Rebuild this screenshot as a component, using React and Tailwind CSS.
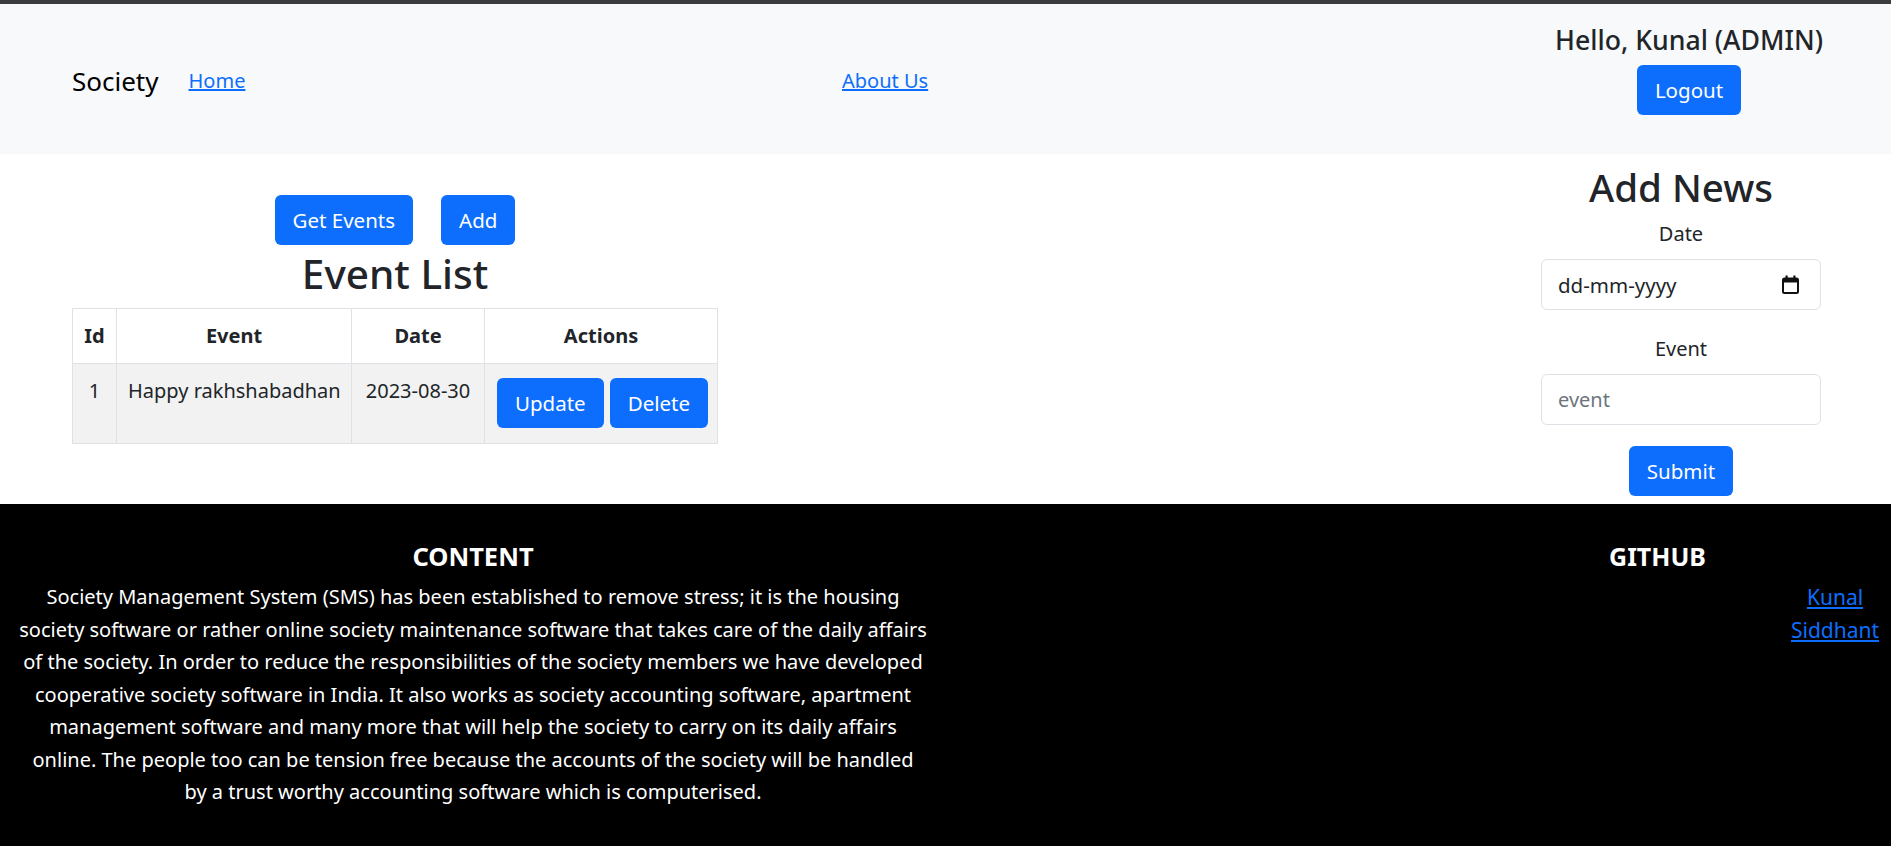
import React from "react";

const FONT = "font-['Noto_Sans',sans-serif]";

const paragraph = [
  "Society Management System (SMS) has been established to remove stress; it is the housing",
  "society software or rather online society maintenance software that takes care of the daily affairs",
  "of the society. In order to reduce the responsibilities of the society members we have developed",
  "cooperative society software in India. It also works as society accounting software, apartment",
  "management software and many more that will help the society to carry on its daily affairs",
  "online. The people too can be tension free because the accounts of the society will be handled",
  "by a trust worthy accounting software which is computerised.",
];

function Btn({ children, className = "" }) {
  return (
    <button
      className={`h-[50px] rounded-[6px] bg-[#0d6efd] px-[18px] text-[20.5px] text-white ${className}`}
    >
      {children}
    </button>
  );
}

function CalendarIcon() {
  return (
    <svg width="17" height="19" viewBox="0 0 17 19">
      <rect x="1" y="3.5" width="15" height="14.5" rx="1.5" fill="none" stroke="#111" strokeWidth="2" />
      <rect x="1" y="3.5" width="15" height="4" fill="#111" />
      <rect x="3.5" y="0.5" width="2.2" height="4" fill="#111" />
      <rect x="11.3" y="0.5" width="2.2" height="4" fill="#111" />
    </svg>
  );
}

export default function App() {
  return (
    <div className={`${FONT} text-[20px] leading-[32px] text-[#212529]`}>
      <div className="h-1 bg-[#3c3c3c]" />

      <nav className="flex h-[150px] bg-[#f8f9fa]">
        <div className="flex w-[842px] items-center gap-[30px] pl-[72px] pt-[4px]">
          <span className="text-[26px] text-black">Society</span>
          <a href="#" className="text-[#0d6efd] underline">
            Home
          </a>
        </div>
        <div className="flex flex-1 items-center pt-[4px]">
          <a href="#" className="text-[#0d6efd] underline">
            About Us
          </a>
        </div>
        <div className="flex w-[404px] flex-col items-center pt-[20px]">
          <h5 className="text-[26.67px] font-medium leading-[32px]">Hello, Kunal (ADMIN)</h5>
          <Btn className="mt-[9px]">Logout</Btn>
        </div>
      </nav>

      <main className="flex h-[350px] pl-[72px] pr-[70px]">
        <section className="flex w-[646px] flex-col items-center pt-[41px]">
          <div className="flex gap-[28px]">
            <Btn>Get Events</Btn>
            <Btn>Add</Btn>
          </div>
          <h2 className="mt-[3px] text-[40.5px] font-medium leading-[51px]">Event List</h2>
          <table className="mt-[9px] w-full table-fixed border-collapse border border-[#dee2e6]">
            <thead>
              <tr className="bg-white">
                <Th className="w-[44px]">Id</Th>
                <Th className="w-[235px]">Event</Th>
                <Th className="w-[133px]">Date</Th>
                <Th>Actions</Th>
              </tr>
            </thead>
            <tbody>
              <tr className="h-[80px] bg-[#f2f2f2]">
                <Td>1</Td>
                <Td>Happy rakhshabadhan</Td>
                <Td>2023-08-30</Td>
                <td className="border border-[#dee2e6] px-[12px] py-[14px] align-top">
                  <div className="flex gap-[6px]">
                    <Btn>Update</Btn>
                    <Btn>Delete</Btn>
                  </div>
                </td>
              </tr>
            </tbody>
          </table>
        </section>

        <div className="flex-1" />

        <section className="flex w-[280px] flex-col items-center pt-[8px]">
          <h2 className="text-[38.5px] font-medium leading-[51px]">Add News</h2>
          <label className="mt-[5px]">Date</label>
          <div className="mt-[9px] flex h-[51px] w-full items-center justify-between rounded-[6px] border border-[#dee2e6] bg-white pl-[16px] pr-[21px]">
            <span className="text-[20.5px]">dd-mm-yyyy</span>
            <CalendarIcon />
          </div>
          <label className="mt-[23px]">Event</label>
          <input
            placeholder="event"
            className="mt-[9px] h-[51px] w-full rounded-[6px] border border-[#dee2e6] bg-white px-[16px] outline-none placeholder:text-[#6c757d]"
          />
          <Btn className="mt-[21px]">Submit</Btn>
        </section>
      </main>

      <footer className="flex h-[342px] bg-black pt-[36px] text-white">
        <div className="w-[946px] text-center">
          <h5 className="text-[25.5px] font-bold leading-[32px]">CONTENT</h5>
          <p className="mt-[9px] whitespace-nowrap leading-[32.5px]">
            {paragraph.map((line, i) => (
              <React.Fragment key={i}>
                {line}
                {i < paragraph.length - 1 && <br />}
              </React.Fragment>
            ))}
          </p>
        </div>
        <div className="flex-1" />
        <div className="w-[467px]">
          <h5 className="text-center text-[25px] font-bold leading-[32px]">GITHUB</h5>
          <div className="mt-[9px] flex justify-end">
            <ul className="w-[112px] text-center text-[21px] leading-[32.5px]">
              <li>
                <a href="#" className="text-[#0d6efd] underline">
                  Kunal
                </a>
              </li>
              <li>
                <a href="#" className="text-[#0d6efd] underline">
                  Siddhant
                </a>
              </li>
            </ul>
          </div>
        </div>
      </footer>
    </div>
  );
}

function Th({ children, className = "" }) {
  return (
    <th className={`border border-[#dee2e6] px-[11px] py-[11px] font-bold ${className}`}>
      {children}
    </th>
  );
}

function Td({ children }) {
  return (
    <td className="whitespace-nowrap border border-[#dee2e6] px-[11px] pt-[11px] text-center align-top">
      {children}
    </td>
  );
}
